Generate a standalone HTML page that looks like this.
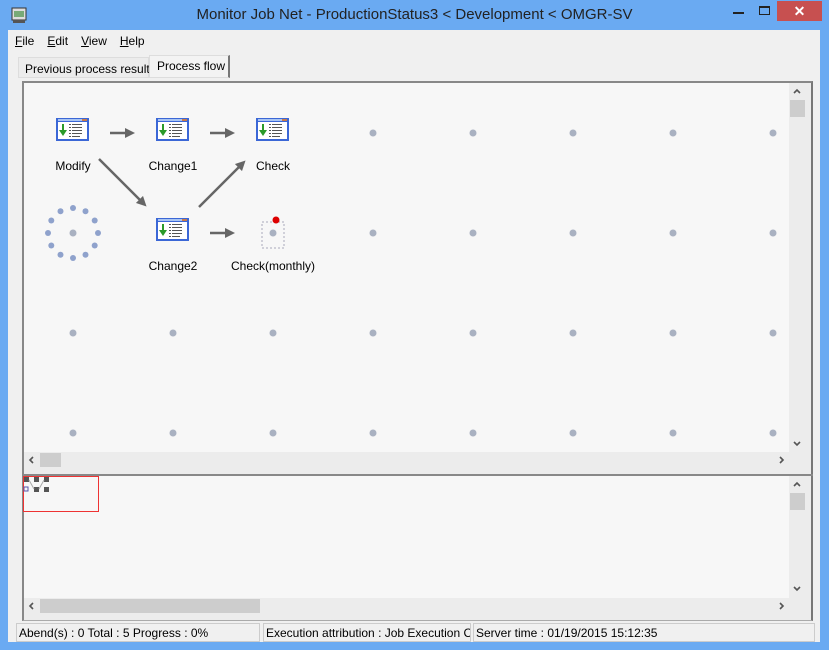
<!DOCTYPE html>
<html><head><meta charset="utf-8"><style>
*{margin:0;padding:0;box-sizing:border-box}
body{width:829px;height:650px;overflow:hidden;background:#6aaaf2;font-family:"Liberation Sans",sans-serif;font-size:12px;color:#000;position:relative}
.abs{position:absolute}
.title{left:0;top:0;width:829px;height:30px;text-align:center;font-size:15px;line-height:30px;color:#222}
.client{left:8px;top:30px;width:812px;height:612px;background:#f0f0f0}
.menu span{margin-right:13px}
.sb{background:#ececec}
.thumb{background:#cdcdcd}
.arr{position:absolute}
</style></head><body>
<div class="abs title">Monitor Job Net - ProductionStatus3 &lt; Development &lt; OMGR-SV</div>
<svg class="abs" style="left:10px;top:6px" width="18" height="18"><rect x="2" y="2" width="14" height="12" fill="#ddd" stroke="#333"/><rect x="4" y="5" width="10" height="6" fill="#7a7"/><rect x="3" y="14" width="12" height="3" fill="#555"/></svg>
<div class="abs" style="left:733px;top:12px;width:11px;height:2px;background:#222"></div>
<div class="abs" style="left:759px;top:6px;width:11px;height:9px;border:1px solid #222;border-top-width:2px"></div>
<div class="abs" style="left:777px;top:1px;width:45px;height:20px;background:#c75050;color:#fff;text-align:center;font-size:14px;line-height:20px;font-weight:bold">✕</div>
<div class="abs client"></div>
<div class="abs menu" style="left:15px;top:34px;font-size:12px"><span><u>F</u>ile</span><span><u>E</u>dit</span><span><u>V</u>iew</span><span><u>H</u>elp</span></div>
<div class="abs" style="left:18px;top:57px;width:131px;height:21px;background:#ececec;border:1px solid #ddd;padding:4px 0 0 6px;white-space:nowrap">Previous process result</div>
<div class="abs" style="left:149px;top:55px;width:81px;height:23px;background:#f3f3f3;border:1px solid #ddd;border-right:2px solid #777;padding:3px 0 0 7px;white-space:nowrap">Process flow</div>
<div class="abs" style="left:22px;top:81px;width:791px;height:540px;border:1px solid #aaa;border-top:2px solid #888;border-left:2px solid #888;border-right:2px solid #777;background:#ececec"></div>
<div class="abs" style="left:24px;top:83px;width:765px;height:369px;background:#f7f7f7"></div>
<svg width="0" height="0" style="position:absolute"><defs>
<path id="up" d="M1 5 L4 2 L7 5" stroke="#555" stroke-width="1.6" fill="none"/>
<path id="dn" d="M1 2 L4 5 L7 2" stroke="#555" stroke-width="1.6" fill="none"/>
<path id="lf" d="M5 1 L2 4 L5 7" stroke="#555" stroke-width="1.6" fill="none"/>
<path id="rt" d="M2 1 L5 4 L2 7" stroke="#555" stroke-width="1.6" fill="none"/>
</defs></svg>
<!-- upper scrollbars -->
<div class="abs sb" style="left:789px;top:83px;width:17px;height:369px"></div>
<svg class="arr" style="left:793px;top:88px" width="8" height="8"><use href="#up"/></svg>
<div class="abs thumb" style="left:790px;top:100px;width:15px;height:17px"></div>
<svg class="arr" style="left:793px;top:440px" width="8" height="8"><use href="#dn"/></svg>
<div class="abs sb" style="left:24px;top:452px;width:765px;height:16px"></div>
<svg class="arr" style="left:28px;top:456px" width="8" height="8"><use href="#lf"/></svg>
<div class="abs thumb" style="left:40px;top:453px;width:21px;height:14px"></div>
<svg class="arr" style="left:778px;top:456px" width="8" height="8"><use href="#rt"/></svg>
<svg class="abs" style="left:24px;top:83px" width="765" height="369">
<defs>
<g id="ic"><rect x="0" y="0" width="33" height="23" fill="#3b67d6"/><rect x="2" y="4" width="29" height="17" fill="#fff"/><rect x="2" y="1" width="29" height="2" fill="#a9c5f2"/><rect x="26" y="1" width="5" height="2" fill="#c87a4a"/><rect x="6" y="6" width="2" height="8" fill="#2a9a2a"/><path d="M3 12 L7 18 L11 12 Z" fill="#2a9a2a"/><g fill="#555"><rect x="13" y="6" width="2" height="1"/><rect x="16" y="6" width="10" height="1"/><rect x="13" y="9" width="2" height="1"/><rect x="16" y="9" width="10" height="1"/><rect x="13" y="12" width="2" height="1"/><rect x="16" y="12" width="10" height="1"/><rect x="13" y="15" width="2" height="1"/><rect x="16" y="15" width="10" height="1"/><rect x="13" y="18" width="2" height="1"/><rect x="16" y="18" width="8" height="1"/></g></g>
<marker id="m" markerWidth="4" markerHeight="4" refX="2" refY="2" orient="auto"><path d="M0 0 L4 2 L0 4Z" fill="#666"/></marker>
</defs>
<g fill="#a9b1c1">
<circle cx="349" cy="50" r="3.5"/><circle cx="449" cy="50" r="3.5"/><circle cx="549" cy="50" r="3.5"/><circle cx="649" cy="50" r="3.5"/><circle cx="749" cy="50" r="3.5"/>
<circle cx="49" cy="150" r="3.5"/><circle cx="249" cy="150" r="3.5"/><circle cx="349" cy="150" r="3.5"/><circle cx="449" cy="150" r="3.5"/><circle cx="549" cy="150" r="3.5"/><circle cx="649" cy="150" r="3.5"/><circle cx="749" cy="150" r="3.5"/>
<circle cx="49" cy="250" r="3.5"/><circle cx="149" cy="250" r="3.5"/><circle cx="249" cy="250" r="3.5"/><circle cx="349" cy="250" r="3.5"/><circle cx="449" cy="250" r="3.5"/><circle cx="549" cy="250" r="3.5"/><circle cx="649" cy="250" r="3.5"/><circle cx="749" cy="250" r="3.5"/>
<circle cx="49" cy="350" r="3.5"/><circle cx="149" cy="350" r="3.5"/><circle cx="249" cy="350" r="3.5"/><circle cx="349" cy="350" r="3.5"/><circle cx="449" cy="350" r="3.5"/><circle cx="549" cy="350" r="3.5"/><circle cx="649" cy="350" r="3.5"/><circle cx="749" cy="350" r="3.5"/>
</g>
<g fill="#8fa2cc">
<circle cx="49" cy="125" r="3"/><circle cx="61.5" cy="128.3" r="3"/><circle cx="70.7" cy="137.5" r="3"/><circle cx="74" cy="150" r="3"/><circle cx="70.7" cy="162.5" r="3"/><circle cx="61.5" cy="171.7" r="3"/><circle cx="49" cy="175" r="3"/><circle cx="36.5" cy="171.7" r="3"/><circle cx="27.3" cy="162.5" r="3"/><circle cx="24" cy="150" r="3"/><circle cx="27.3" cy="137.5" r="3"/><circle cx="36.5" cy="128.3" r="3"/>
</g>
<use href="#ic" x="32" y="35"/><use href="#ic" x="132" y="35"/><use href="#ic" x="232" y="35"/><use href="#ic" x="132" y="135"/>
<g stroke="#666" stroke-width="2.5" marker-end="url(#m)" fill="none">
<path d="M86 50 L106 50"/><path d="M186 50 L206 50"/><path d="M186 150 L206 150"/>
<path d="M75 76 L119 120"/><path d="M175 124 L218 81"/>
</g>
<rect x="238" y="139" width="22" height="26" fill="none" stroke="#aab" stroke-dasharray="2,2"/>
<circle cx="252" cy="137" r="3.5" fill="#d00"/>
<g font-family="Liberation Sans" font-size="12" text-anchor="middle" fill="#000">
<text x="49" y="87">Modify</text><text x="149" y="87">Change1</text><text x="249" y="87">Check</text>
<text x="149" y="187">Change2</text><text x="249" y="187">Check(monthly)</text>
</g>
</svg>
<!-- lower pane -->
<div class="abs" style="left:22px;top:474px;width:791px;height:2px;background:#888"></div>
<div class="abs" style="left:24px;top:476px;width:765px;height:122px;background:#f7f7f7"></div>
<div class="abs sb" style="left:789px;top:476px;width:17px;height:122px"></div>
<svg class="arr" style="left:793px;top:481px" width="8" height="8"><use href="#up"/></svg>
<div class="abs thumb" style="left:790px;top:493px;width:15px;height:17px"></div>
<svg class="arr" style="left:793px;top:585px" width="8" height="8"><use href="#dn"/></svg>
<div class="abs sb" style="left:24px;top:598px;width:765px;height:16px"></div>
<svg class="arr" style="left:28px;top:602px" width="8" height="8"><use href="#lf"/></svg>
<div class="abs thumb" style="left:40px;top:599px;width:220px;height:14px"></div>
<svg class="arr" style="left:778px;top:602px" width="8" height="8"><use href="#rt"/></svg>
<div class="abs" style="left:23px;top:476px;width:76px;height:36px;border:1px solid #e33"></div>
<svg class="abs" style="left:23px;top:477px" width="30" height="18"><g fill="#555"><rect x="1" y="0" width="5" height="5"/><rect x="11" y="0" width="5" height="5"/><rect x="21" y="0" width="5" height="5"/><rect x="11" y="10" width="5" height="5"/><rect x="21" y="10" width="5" height="5"/></g><path d="M6 3 L11 12 M16 12 L21 3" stroke="#aaa"/><rect x="1" y="10" width="4" height="4" fill="none" stroke="#55a"/></svg>
<!-- status -->
<div class="abs" style="left:16px;top:623px;width:244px;height:19px;border:1px solid #ccc;padding:2px 2px;white-space:nowrap;overflow:hidden">Abend(s) : 0 Total : 5 Progress : 0%</div>
<div class="abs" style="left:263px;top:623px;width:208px;height:19px;border:1px solid #ccc;padding:2px 2px;white-space:nowrap;overflow:hidden">Execution attribution : Job Execution Co</div>
<div class="abs" style="left:473px;top:623px;width:342px;height:19px;border:1px solid #ccc;padding:2px 2px;white-space:nowrap">Server time : 01/19/2015 15:12:35</div>
</body></html>
